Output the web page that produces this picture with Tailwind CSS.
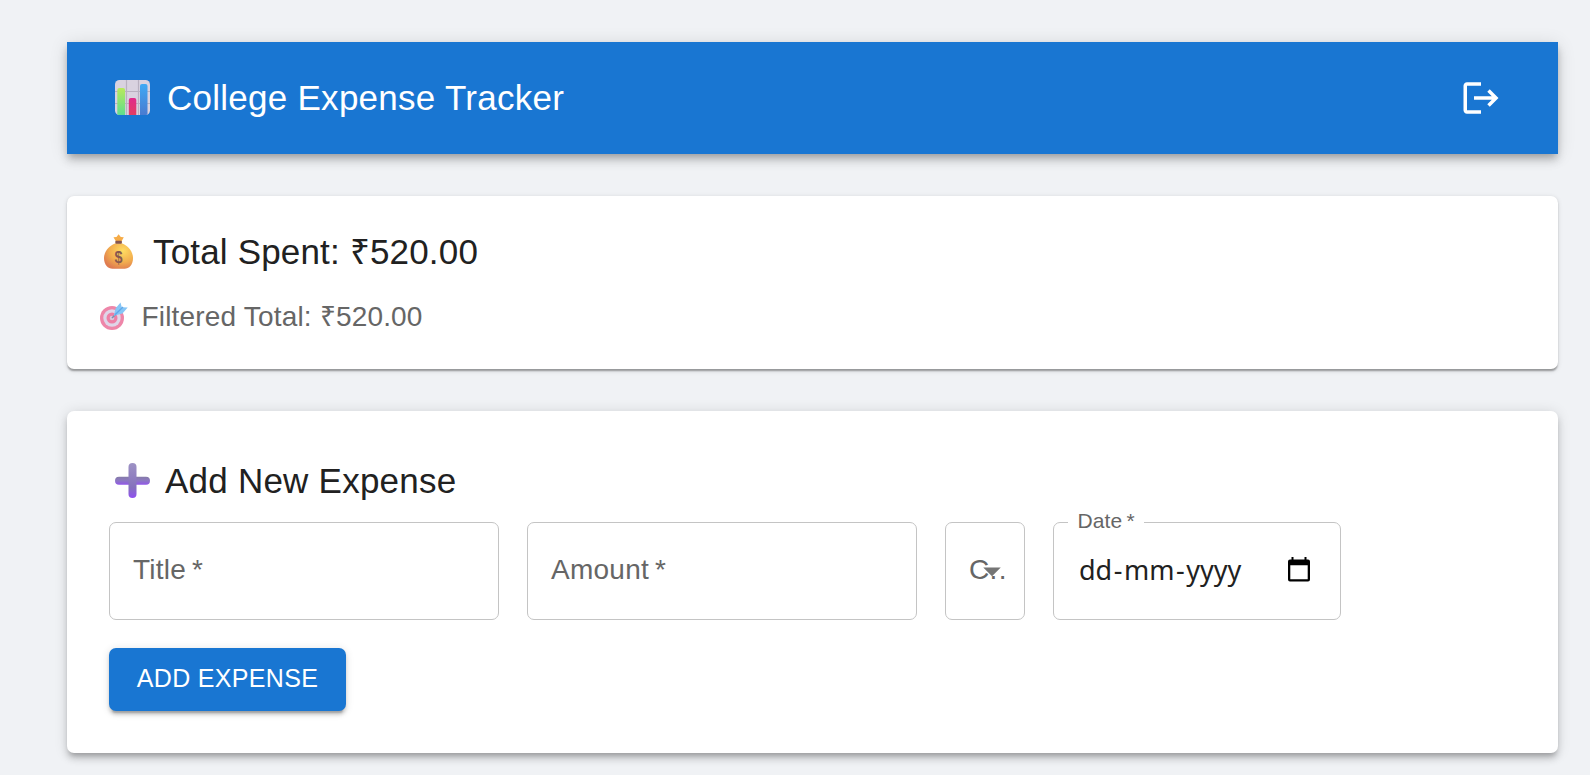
<!DOCTYPE html>
<html lang="en">
<head>
<meta charset="utf-8">
<title>College Expense Tracker</title>
<script src="https://cdn.jsdelivr.net/npm/@tailwindcss/browser@4"></script>
</head>
<body class="h-[775px] overflow-hidden bg-[#f0f2f5] font-['Liberation_Sans',Arial,sans-serif] text-[#212121]">
<main class="ml-[67px] w-[1491px] pt-[42px] flex flex-col gap-[42px]">

  <header class="h-28 bg-[#1976d2] text-white flex items-center pl-[48px] pr-[56px] shadow-[0_3.5px_7px_-1.75px_rgba(0,0,0,0.2),0_7px_8.75px_rgba(0,0,0,0.14),0_1.75px_17.5px_rgba(0,0,0,0.12)]">
    <svg class="size-[35px] shrink-0 mb-[2px]" viewBox="0 0 35 35">
      <defs>
        <linearGradient id="g1" x1="0" y1="0" x2="0" y2="1"><stop offset="0" stop-color="#b8ea5c"/><stop offset="1" stop-color="#5fdc8e"/></linearGradient>
        <linearGradient id="g2" x1="0" y1="0" x2="0" y2="1"><stop offset="0" stop-color="#e02a8c"/><stop offset="1" stop-color="#e23d63"/></linearGradient>
        <linearGradient id="g3" x1="0" y1="0" x2="0" y2="1"><stop offset="0" stop-color="#3fa9f5"/><stop offset="1" stop-color="#4a7bd0"/></linearGradient>
        <clipPath id="c1"><rect width="35" height="35" rx="4.5"/></clipPath>
      </defs>
      <g clip-path="url(#c1)">
        <rect width="35" height="35" fill="#d9d2e0"/>
        <path d="M11.5 0V35M23.5 0V35M0 11.5H35M0 23.5H35" stroke="#b9b0c0" stroke-width="1.2"/>
        <path d="M2.3 35V10a2 2 0 0 1 2-2h3.800a2 2 0 0 1 2 2V35z" fill="url(#g1)"/>
        <path d="M13.800 35V20a2 2 0 0 1 2-2h3.500a2 2 0 0 1 2 2V35z" fill="url(#g2)"/>
        <path d="M25 35V6a2 2 0 0 1 2-2h3.500a2 2 0 0 1 2 2V35z" fill="url(#g3)"/>
      </g>
    </svg>
    <h1 class="ml-[17px] text-[35px] leading-[56px] tracking-[0.2625px] grow">College Expense Tracker</h1>
    <svg class="size-[42px]" viewBox="0 0 24 24" fill="#fff"><path d="m17 7-1.410 1.410L18.170 11H8v2h10.170l-2.580 2.580L17 17l5-5zM4 5h8V3H4c-1.100 0-2 .900-2 2v14c0 1.100.900 2 2 2h8v-2H4z"/></svg>
  </header>

  <section class="h-[173px] rounded-[7px] bg-white pt-7 pl-[33px] shadow-[0_3.5px_1.75px_-1.75px_rgba(0,0,0,0.2),0_1.75px_1.75px_rgba(0,0,0,0.14),0_1.75px_5.25px_rgba(0,0,0,0.12)]">
    <div class="flex items-center h-14 pl-[4px]">
      <svg class="w-[29px] h-[35px] mb-[2px]" viewBox="0 0 29 35">
        <defs><radialGradient id="g4" cx=".65" cy=".3" r=".75"><stop offset="0" stop-color="#ffdc62"/><stop offset=".6" stop-color="#f2ad4e"/><stop offset="1" stop-color="#df7c50"/></radialGradient></defs>
        <path d="M9.500 3.200 12.500 3 14.600.3l2.200 2.600 3 .3-2.200 4H11.800z" fill="#f6ac48"/>
        <path d="M11.600 9.200h6c5 1.500 11.400 7.300 11.400 14.800C29 31 25 34.700 20.500 34.700h-12C4 34.700 0 31 0 24 0 16.500 6.600 10.700 11.600 9.200z" fill="url(#g4)"/>
        <rect x="11.300" y="6.700" width="6.600" height="3" rx="1" fill="#84554f"/>
        <text x="14.600" y="28.600" text-anchor="middle" font-size="16" font-weight="700" fill="#86584f" textLength="8" lengthAdjust="spacingAndGlyphs" font-family="Liberation Sans">$</text>
      </svg>
      <h2 class="ml-[20px] text-[35px] tracking-[0.17px]">Total Spent: ₹520.00</h2>
    </div>
    <div class="flex items-center mt-[15px] h-[42px] text-[#666]">
      <svg class="size-[28px]" viewBox="0 0 28 28">
        <circle cx="12" cy="16" r="12" fill="#ee86a9"/><circle cx="12" cy="16" r="8.700" fill="#dfd5e8"/><circle cx="12" cy="16" r="5.500" fill="#ee7fa5"/><circle cx="12" cy="16" r="2.300" fill="#d8c8dc"/>
        <path d="M12 16 18 10" stroke="#7d8db0" stroke-width="1.600"/>
        <path d="M13.800 13.800 15.500 6.500 20.500.4 21.800 5.300 27.700 5.600 22.500 11.600z" fill="#86c6f6"/>
        <path d="M15 12.800 23 5" stroke="#5fa8ea" stroke-width="1.300"/>
      </svg>
      <p class="ml-[13.500px] pt-[2px] text-[28px] tracking-[0.18px]">Filtered Total: ₹520.00</p>
    </div>
  </section>

  <section class="h-[342px] rounded-[7px] bg-white p-[42px] shadow-[0_5.25px_5.25px_-3.5px_rgba(0,0,0,0.2),0_5.25px_7px_rgba(0,0,0,0.14),0_1.75px_14px_rgba(0,0,0,0.12)]">
    <div class="flex items-center h-14 pl-[6px]">
      <svg class="size-[35px] mb-[2px]" viewBox="0 0 35 35">
        <defs><linearGradient id="g5" x1="0" y1="0" x2="0" y2="1"><stop offset="0" stop-color="#857ba8"/><stop offset=".45" stop-color="#8c79c0"/><stop offset="1" stop-color="#9157e8"/></linearGradient>
        <linearGradient id="g6" x1="0" y1="0" x2="0" y2="1"><stop offset="0" stop-color="#9d92c4"/><stop offset=".7" stop-color="#8570bd"/><stop offset="1" stop-color="#9050f0"/></linearGradient></defs>
        <rect y="13.700" width="35" height="8" rx="4" fill="url(#g5)"/>
        <rect x="13.500" width="8" height="35" rx="4" fill="url(#g6)"/>
      </svg>
      <h2 class="ml-[15px] text-[35px] tracking-[0.23px]">Add New Expense</h2>
    </div>
    <div class="mt-[13px] flex gap-7 text-[28px] text-[#666] tracking-[0.2626px]">
      <div class="w-[390px] h-[98px] rounded-[7px] border border-[#c4c4c4] flex items-center pl-[23px] pb-[2px]">Title&thinsp;*</div>
      <div class="w-[390px] h-[98px] rounded-[7px] border border-[#c4c4c4] flex items-center pl-[23px] pb-[2px]">Amount&thinsp;*</div>
      <div class="relative w-[80px] h-[98px] rounded-[7px] border border-[#c4c4c4] flex items-center pl-[23px] pb-[2px]">C<span class="tracking-[1.5px]">..</span>
        <svg class="absolute left-[25px] top-[27px] size-[42px]" viewBox="0 0 24 24" fill="#757575"><path d="m7 10 5 5 5-5z"/></svg>
      </div>
      <div class="relative w-[288px] h-[98px] rounded-[7px] border border-[#c4c4c4] flex items-center justify-between pl-[25px] pr-[29px] text-[#212121]">
        <span class="absolute left-[14px] top-[-14px] w-[76px] pl-[9.500px] bg-white text-[21px] leading-[24px] tracking-[0.1px] text-[#666]">Date&thinsp;*</span>
        <span class="font-['Noto_Sans'] text-[27px] tracking-normal pb-[2px]">dd<span class="mx-[1.500px]">-</span>mm<span class="mx-[1.500px]">-</span>yyyy</span>
        <svg class="w-[24px] h-[26px] mb-[2px]" viewBox="0 0 24 26"><path d="M4.500 0h2v2.500h11V0h2v2.500H21a2 2 0 0 1 2 2V22.500a2 2 0 0 1-2 2H3a2 2 0 0 1-2-2V4.500a2 2 0 0 1 2-2h1.500zM3.300 8.200V22.200H20.700V8.200z" fill="#000" fill-rule="evenodd"/></svg>
      </div>
    </div>
    <button class="mt-7 w-[237px] h-[63px] rounded-[7px] bg-[#1976d2] text-white text-[25px] tracking-[0.32px] pb-[1px] whitespace-nowrap shadow-[0_5.25px_1.75px_-3.5px_rgba(0,0,0,0.2),0_3.5px_3.5px_rgba(0,0,0,0.14),0_1.75px_8.75px_rgba(0,0,0,0.12)]">ADD EXPENSE</button>
  </section>
</main>
</body>
</html>
